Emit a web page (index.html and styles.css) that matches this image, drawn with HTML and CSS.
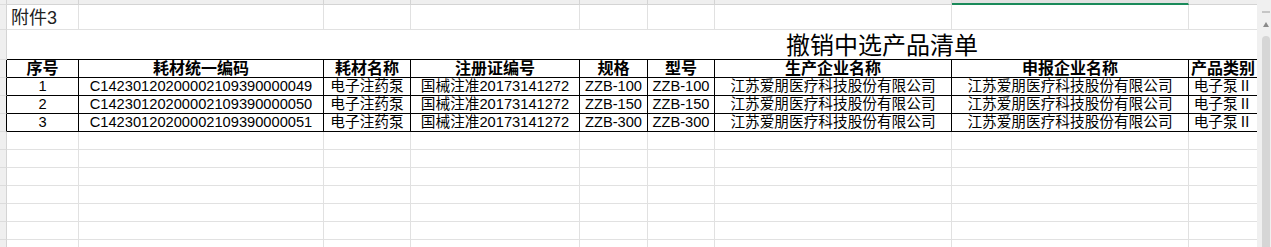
FILE: index.html
```html
<!DOCTYPE html>
<html lang="zh-CN">
<head>
<meta charset="utf-8">
<title>撤销中选产品清单</title>
<link rel="stylesheet" href="styles.css">
</head>
<body>
<div class="sheet">
  <div class="grid">
    <div class="row top">
      <div class="rh"></div>
      <div class="c"></div><div class="c"></div><div class="c"></div><div class="c"></div>
      <div class="c"></div><div class="c"></div><div class="c"></div><div class="c sel"></div><div class="c last"></div>
    </div>
    <div class="row r1">
      <div class="rh"></div>
      <div class="c att">附件3</div>
      <div class="c"></div><div class="c"></div><div class="c"></div><div class="c"></div>
      <div class="c"></div><div class="c"></div><div class="c"></div><div class="c last"></div>
    </div>
    <div class="row r2">
      <div class="rh"></div>
      <div class="title">撤销中选产品清单</div>
    </div>
    <div class="row tbl">
      <div class="rh"></div>
      <div class="c th">序号</div>
      <div class="c th">耗材统一编码</div>
      <div class="c th">耗材名称</div>
      <div class="c th">注册证编号</div>
      <div class="c th">规格</div>
      <div class="c th">型号</div>
      <div class="c th">生产企业名称</div>
      <div class="c th">申报企业名称</div>
      <div class="c th last">产品类别</div>
    </div>
    <div class="row tbl">
      <div class="rh"></div>
      <div class="c td">1</div>
      <div class="c td">C14230120200002109390000049</div>
      <div class="c td">电子注药泵</div>
      <div class="c td">国械注准20173141272</div>
      <div class="c td">ZZB-100</div>
      <div class="c td">ZZB-100</div>
      <div class="c td">江苏爱朋医疗科技股份有限公司</div>
      <div class="c td">江苏爱朋医疗科技股份有限公司</div>
      <div class="c td last">电子泵Ⅱ</div>
    </div>
    <div class="row tbl">
      <div class="rh"></div>
      <div class="c td">2</div>
      <div class="c td">C14230120200002109390000050</div>
      <div class="c td">电子注药泵</div>
      <div class="c td">国械注准20173141272</div>
      <div class="c td">ZZB-150</div>
      <div class="c td">ZZB-150</div>
      <div class="c td">江苏爱朋医疗科技股份有限公司</div>
      <div class="c td">江苏爱朋医疗科技股份有限公司</div>
      <div class="c td last">电子泵Ⅱ</div>
    </div>
    <div class="row tbl">
      <div class="rh"></div>
      <div class="c td">3</div>
      <div class="c td">C14230120200002109390000051</div>
      <div class="c td">电子注药泵</div>
      <div class="c td">国械注准20173141272</div>
      <div class="c td">ZZB-300</div>
      <div class="c td">ZZB-300</div>
      <div class="c td">江苏爱朋医疗科技股份有限公司</div>
      <div class="c td">江苏爱朋医疗科技股份有限公司</div>
      <div class="c td last">电子泵Ⅱ</div>
    </div>
    <div class="row"><div class="rh"></div><div class="c"></div><div class="c"></div><div class="c"></div><div class="c"></div><div class="c"></div><div class="c"></div><div class="c"></div><div class="c"></div><div class="c last"></div></div>
    <div class="row"><div class="rh"></div><div class="c"></div><div class="c"></div><div class="c"></div><div class="c"></div><div class="c"></div><div class="c"></div><div class="c"></div><div class="c"></div><div class="c last"></div></div>
    <div class="row"><div class="rh"></div><div class="c"></div><div class="c"></div><div class="c"></div><div class="c"></div><div class="c"></div><div class="c"></div><div class="c"></div><div class="c"></div><div class="c last"></div></div>
    <div class="row"><div class="rh"></div><div class="c"></div><div class="c"></div><div class="c"></div><div class="c"></div><div class="c"></div><div class="c"></div><div class="c"></div><div class="c"></div><div class="c last"></div></div>
    <div class="row"><div class="rh"></div><div class="c"></div><div class="c"></div><div class="c"></div><div class="c"></div><div class="c"></div><div class="c"></div><div class="c"></div><div class="c"></div><div class="c last"></div></div>
    <div class="row"><div class="rh"></div><div class="c"></div><div class="c"></div><div class="c"></div><div class="c"></div><div class="c"></div><div class="c"></div><div class="c"></div><div class="c"></div><div class="c last"></div></div>
    <div class="row"><div class="rh"></div><div class="c"></div><div class="c"></div><div class="c"></div><div class="c"></div><div class="c"></div><div class="c"></div><div class="c"></div><div class="c"></div><div class="c last"></div></div>
  </div>
  <div class="vscroll">
    <div class="vs-dash"></div>
    <div class="vs-arrow"></div>
    <div class="vs-thumb"></div>
  </div>
</div>
</body>
</html>
```
FILE: styles.css
```css
*, *::before, *::after { box-sizing: border-box; }
html, body { margin: 0; padding: 0; background: #fff; }
body {
  width: 1271px;
  height: 247px;
  overflow: hidden;
  font-family: "Liberation Sans", "Noto Sans CJK SC", sans-serif;
  color: #000;
}
.sheet {
  display: flex;
  width: 1271px;
  height: 247px;
  overflow: hidden;
}
.grid {
  flex: none;
  width: 1257px;
  height: 247px;
  display: flex;
  flex-direction: column;
  overflow: hidden;
}
.row {
  flex: none;
  display: grid;
  grid-template-columns: 7px 72px 245px 87px 169px 68px 67px 237px 237px 68px;
  height: 18px;
}
.rh {
  background: #efefef;
  border-right: 1px solid #d4d4d4;
  border-bottom: 1px solid #dcdcdc;
}
.c {
  min-width: 0;
  border-right: 1px solid #e1e1e1;
  border-bottom: 1px solid #e1e1e1;
  display: flex;
  align-items: center;
  justify-content: center;
  white-space: nowrap;
  overflow: hidden;
}
.c.last { border-right: 0; }

/* column header strip */
.top { height: 5px; }
.top .c {
  background: #efefef;
  border-right-color: #d4d4d4;
  border-bottom-color: #d4d4d4;
}
.top .c.sel {
  background: #e1e1e1;
  border-bottom: 2px solid #1a8a5a;
}

/* row 1 */
.r1 { height: 25px; }
.att {
  justify-content: flex-start;
  align-items: flex-end;
  padding-left: 4px;
  font-size: 18px;
  line-height: 22px;
  color: #222;
}

/* row 2: merged title */
.r2 { height: 30px; }
.title {
  grid-column: 2 / -1;
  border-bottom: 1px solid #000;
  display: flex;
  align-items: flex-end;
  padding-left: 779px;
  font-size: 24px;
  line-height: 27px;
  white-space: nowrap;
}

/* bordered table */
.tbl .rh { border-right-color: #000; }
.tbl .c {
  border-right-color: #000;
  border-bottom-color: #000;
}
.th {
  font-weight: 700;
  font-size: 16px;
  line-height: 17px;
}
.td {
  font-size: 14.67px;
  line-height: 17px;
}

/* vertical scrollbar */
.vscroll {
  flex: none;
  width: 14px;
  height: 247px;
  background: #f0f0f0;
  display: flex;
  flex-direction: column;
  align-items: center;
  padding: 11px 1px 0 5px;
}
.vs-dash {
  flex: none;
  width: 8px;
  height: 2px;
  background: #c6c6c6;
}
.vs-arrow {
  flex: none;
  margin-top: 9px;
  width: 0;
  height: 0;
  border-left: 3px solid transparent;
  border-right: 3px solid transparent;
  border-bottom: 5px solid #8a8a8a;
}
.vs-thumb {
  flex: 1;
  align-self: stretch;
  margin-top: 9px;
  background: #d6d6d6;
  border-radius: 4px 4px 0 0;
}
```
